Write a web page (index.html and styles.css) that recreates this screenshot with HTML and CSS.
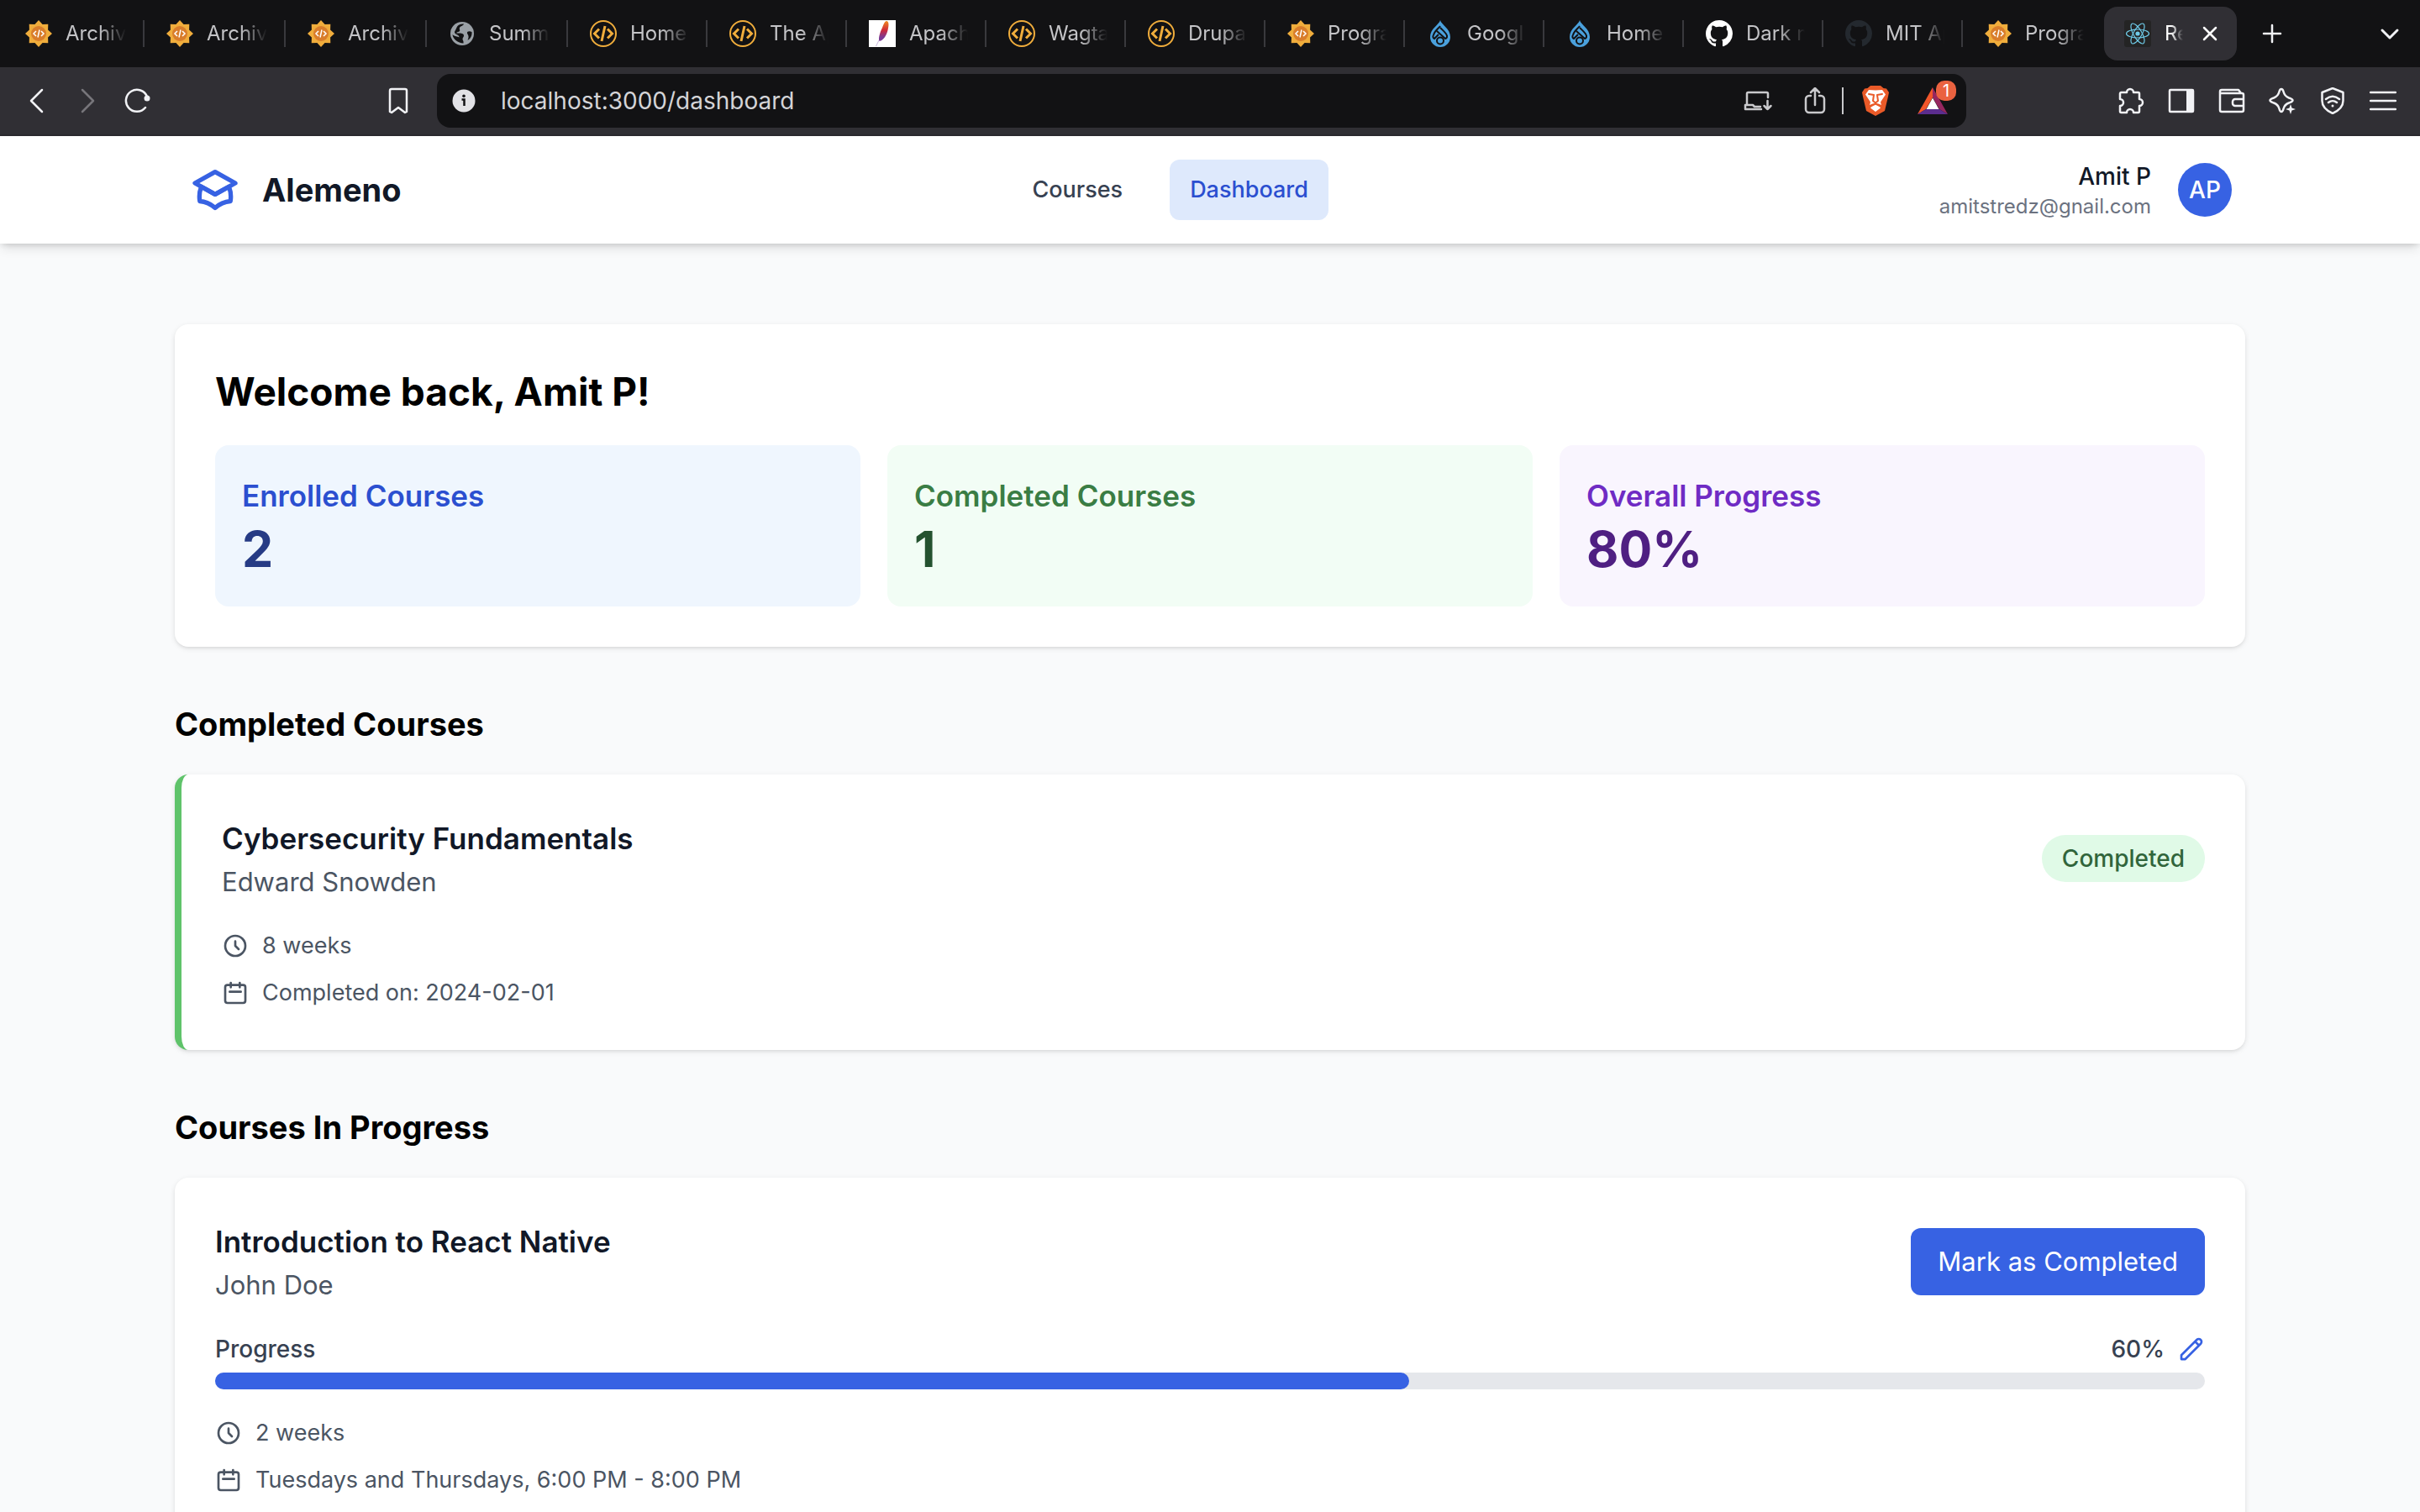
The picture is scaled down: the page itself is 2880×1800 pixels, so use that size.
FILE: index.html
```html
<!DOCTYPE html>
<html lang="en">
<head>
<meta charset="utf-8">
<title>Dashboard</title>
<link rel="stylesheet" href="styles.css">
</head>
<body>
<svg class="sprite" aria-hidden="true">
  <symbol id="i-sun" viewBox="0 0 32 32">
    <path fill="#f0ad3c" d="M16 0l4.600 4.900 6.700-.2-.2 6.700L32 16l-4.900 4.600.2 6.700-6.700-.2L16 32l-4.600-4.900-6.700.2.2-6.700L0 16l4.900-4.600-.2-6.700 6.700.2z"/>
    <circle cx="16" cy="16" r="9" fill="#d97d2b"/>
    <path fill="none" stroke="#fff" stroke-width="1.500" d="M13 13l-3 3 3 3M19 13l3 3-3 3M17 11.500l-2 9"/>
  </symbol>
  <symbol id="i-code" viewBox="0 0 32 32">
    <circle cx="16" cy="16" r="15" fill="none" stroke="#f0ad3c" stroke-width="2"/>
    <path fill="none" stroke="#f0ad3c" stroke-width="3" d="M11 10.500L5.500 16l5.500 5.500M21 10.500l5.500 5.500-5.500 5.500M18 7l-4 18"/>
  </symbol>
  <symbol id="i-globe" viewBox="0 0 32 32">
    <circle cx="16" cy="16" r="14" fill="#9aa0a6"/>
    <path fill="#121214" d="M18 4.500c-1 3-4 2-5 4.500-.8 2.200 1 2.500 0 4-1 1.300-3 .8-4 2.500 4 0 8.500-.5 9 2.500.3 2-1.500 2.500-1.500 4.500 0 1.500 1.500 2 1 5C11 27 5 23 4.500 17c3 3 5.500 2 8 3.500 0-1.500-1-2.500-3-3.500-3-1.500-3-3-1.500-5 1-1.500 1-3 2.500-5 1.500-1.800 4-2.800 7.500-2.500z"/>
    <path fill="#121214" d="M27.500 14c-3-1.500-6-.5-5.500 1.500s3 3 .5 8.500c3-1.500 5.500-5 5-10z"/>
  </symbol>
  <symbol id="i-feather" viewBox="0 0 32 32">
    <defs><linearGradient id="fg" x1="0" y1="0" x2="0" y2="1"><stop offset="0" stop-color="#f08a1d"/><stop offset=".45" stop-color="#cf2a3a"/><stop offset=".8" stop-color="#7b3a94"/></linearGradient></defs>
    <path fill="#fff" d="M0 0h32v32H0z"/>
    <path fill="url(#fg)" d="M21 1c3 0 3 5 1.500 11-1.500 6-5 12-10 13C11 22 13 15 16 9c1.500-4 3-8 5-8z"/>
    <path stroke="#c9b6dc" d="M12 24l-3.500 7"/>
  </symbol>
  <symbol id="i-drop" viewBox="0 0 32 32">
    <path fill="#4aa0dc" d="M16 0c1 5 12 10 12 20a12 12 0 0 1-24 0C4 10 15 5 16 0z"/>
    <path fill="none" stroke="#121214" stroke-width="2" d="M16 7c-2 3-7 6-8 11M12 13l10 9a2.500 2.500 0 0 0 2-3c0-3-4-6-8-10M14 17l-5 5a2.500 2.500 0 0 1-1-4"/>
    <circle cx="16" cy="24.500" r="4" fill="none" stroke="#121214" stroke-width="2"/>
  </symbol>
  <symbol id="i-github" viewBox="0 0 16 16">
    <path d="M8 0C3.580 0 0 3.580 0 8c0 3.540 2.290 6.530 5.470 7.590.4.070.55-.17.55-.38 0-.19-.01-.82-.01-1.490-2.010.37-2.530-.49-2.690-.94-.09-.23-.48-.94-.82-1.130-.28-.15-.68-.52-.01-.53.63-.01 1.080.58 1.230.82.72 1.210 1.870.87 2.330.66.07-.52.28-.87.51-1.070-1.780-.2-3.640-.89-3.640-3.950 0-.87.31-1.590.82-2.150-.08-.2-.36-1.020.08-2.120 0 0 .67-.21 2.200.82.64-.18 1.320-.27 2-.27s1.360.09 2 .27c1.530-1.040 2.200-.82 2.200-.82.44 1.100.16 1.920.08 2.120.51.56.82 1.270.82 2.150 0 3.070-1.870 3.750-3.650 3.950.29.25.54.73.54 1.480 0 1.070-.01 1.930-.01 2.200 0 .21.15.46.55.38A8.010 8.010 0 0 0 16 8c0-4.420-3.580-8-8-8z"/>
  </symbol>
  <symbol id="i-react" viewBox="0 0 32 32">
    <rect width="32" height="32" rx="3" fill="#242424"/>
    <g fill="none" stroke="#6fcbe8" stroke-width="1.200">
      <ellipse cx="16" cy="16" rx="13.500" ry="5"/>
      <ellipse cx="16" cy="16" rx="13.500" ry="5" transform="rotate(60 16 16)"/>
      <ellipse cx="16" cy="16" rx="13.500" ry="5" transform="rotate(120 16 16)"/>
    </g>
    <circle cx="16" cy="16" r="2.600" fill="#6fcbe8"/>
  </symbol>
  <symbol id="i-clock" viewBox="0 0 24 24">
    <path class="line" d="M12 8v4l3 3m6-3a9 9 0 1 1-18 0 9 9 0 0 1 18 0z"/>
  </symbol>
  <symbol id="i-calendar" viewBox="0 0 24 24">
    <path class="line" d="M8 7V3m8 4V3m-9 8h10M5 21h14a2 2 0 0 0 2-2V7a2 2 0 0 0-2-2H5a2 2 0 0 0-2 2v12a2 2 0 0 0 2 2z"/>
  </symbol>
</svg>

<div class="browser">
  <div class="tabs">
    <div class="tab"><svg class="fav"><use href="#i-sun"/></svg><span class="tab-title">Archiv</span></div>
    <div class="tab"><svg class="fav"><use href="#i-sun"/></svg><span class="tab-title">Archiv</span></div>
    <div class="tab"><svg class="fav"><use href="#i-sun"/></svg><span class="tab-title">Archiv</span></div>
    <div class="tab"><svg class="fav"><use href="#i-globe"/></svg><span class="tab-title">Summ</span></div>
    <div class="tab narrow"><svg class="fav"><use href="#i-code"/></svg><span class="tab-title">Home</span></div>
    <div class="tab narrow"><svg class="fav"><use href="#i-code"/></svg><span class="tab-title">The Ap</span></div>
    <div class="tab narrow"><svg class="fav"><use href="#i-feather"/></svg><span class="tab-title">Apach</span></div>
    <div class="tab narrow"><svg class="fav"><use href="#i-code"/></svg><span class="tab-title">Wagta</span></div>
    <div class="tab narrow"><svg class="fav"><use href="#i-code"/></svg><span class="tab-title">Drupa</span></div>
    <div class="tab narrow"><svg class="fav"><use href="#i-sun"/></svg><span class="tab-title">Progra</span></div>
    <div class="tab narrow"><svg class="fav"><use href="#i-drop"/></svg><span class="tab-title">Googl</span></div>
    <div class="tab narrow"><svg class="fav"><use href="#i-drop"/></svg><span class="tab-title">Home</span></div>
    <div class="tab narrow"><svg class="fav gh-light"><use href="#i-github"/></svg><span class="tab-title">Dark m</span></div>
    <div class="tab narrow"><svg class="fav gh-dark"><use href="#i-github"/></svg><span class="tab-title">MIT Ap</span></div>
    <div class="tab narrow last"><svg class="fav"><use href="#i-sun"/></svg><span class="tab-title">Progra</span></div>
    <div class="tab active"><svg class="fav"><use href="#i-react"/></svg><span class="tab-title">Re</span>
      <button class="icon-btn close" aria-label="Close tab"><svg width="32" height="32" viewBox="0 0 32 32"><path d="M9 9l14 14M23 9L9 23"/></svg></button></div>
    <button class="icon-btn new-tab" aria-label="New tab"><svg width="32" height="32" viewBox="0 0 32 32"><path d="M16 6v20M6 16h20"/></svg></button>
    <button class="icon-btn tab-search" aria-label="Search tabs"><svg width="32" height="32" viewBox="0 0 32 32"><path stroke-width="3" d="M7 12l9 9 9-9"/></svg></button>
  </div>

  <div class="toolbar">
    <button class="icon-btn" aria-label="Back"><svg width="32" height="32" viewBox="0 0 32 32"><path d="M22 3L9 16l13 13"/></svg></button>
    <button class="icon-btn dim" aria-label="Forward"><svg width="32" height="32" viewBox="0 0 32 32"><path d="M10 3l13 13-13 13"/></svg></button>
    <button class="icon-btn" aria-label="Reload"><svg width="32" height="32" viewBox="0 0 32 32"><path d="M25 24a13 13 0 1 1 2-13"/><circle class="solid" cx="27" cy="13" r="3.500"/></svg></button>
    <button class="icon-btn bookmark" aria-label="Bookmark"><svg width="32" height="32" viewBox="0 0 32 32"><path d="M6 29V4a2 2 0 0 1 2-2h16a2 2 0 0 1 2 2v25l-2 1-8-6-8 6z"/></svg></button>
    <div class="address">
      <svg class="info" viewBox="0 0 28 28"><circle cx="14" cy="14" r="13.500" fill="#e2e2e6"/><path fill="none" stroke="#121214" stroke-width="2.500" d="M11.500 12.500h3V20"/><circle cx="14" cy="8.300" r="1.800" fill="#121214"/></svg>
      <input class="url" type="text" aria-label="Address" value="localhost:3000/dashboard">
      <button class="icon-btn soft" aria-label="Install"><svg width="36" height="32" viewBox="0 0 36 32"><path d="M5 21V7.500A1.500 1.500 0 0 1 6.500 6h22A1.500 1.500 0 0 1 30 7.500V12M22 26H3v-5h9l2 2h7M29.500 16v10M25.500 22l4 4 4-4"/></svg></button>
      <button class="icon-btn soft share" aria-label="Share"><svg width="32" height="32" viewBox="0 0 32 32"><path d="M11 10H9a4 4 0 0 0-4 4v12a4 4 0 0 0 4 4h14a4 4 0 0 0 4-4V14a4 4 0 0 0-4-4h-2M16 21V1M11 6l5-5 5 5"/></svg></button>
      <span class="divider"></span>
      <button class="icon-btn" aria-label="Shields"><svg width="32" height="36" viewBox="0 0 32 36"><path fill="#ea5a28" stroke="none" d="M10 0h12l3.500 3 3.500.5L32 8l-1 5-4 17-11 6-11-6L1 13 0 8l3-4.500L6.500 3z"/><path fill="#fff" stroke="none" d="M16 5.500l8-.5 4 5.500-6 9 1 3.500-5-2 2 3 2 2.500L16 31l-6-4.500 2-2.500 2-3-5 2 1-3.500-6-9L8 5z"/><path stroke="#ea5a28" stroke-width="2" d="M8 10l6 1-1 7 3 2.500 3-2.500-1-7 6-1M11 24l5-2.500 5 2.500"/></svg></button>
      <button class="icon-btn rewards" aria-label="Rewards, 1 new"><svg width="36" height="32" viewBox="0 0 36 32"><path fill="#f1562b" stroke="none" d="M18 0v12L10 26 0 32z"/><path fill="#96275f" stroke="none" d="M18 0v12l8 14 10 6z"/><path fill="#5b2d8e" stroke="none" d="M0 32l10-6h16l10 6z"/><path fill="#fff" stroke="none" d="M18 12.500L10.500 26h15z"/></svg><span class="badge">1</span></button>
    </div>
    <button class="icon-btn" aria-label="Extensions"><svg width="32" height="32" viewBox="0 0 32 32"><path d="M3 7.500A1.500 1.500 0 0 1 4.500 6H11a4 4 0 0 1 8 0h5.500A1.500 1.500 0 0 1 26 7.500V14a4 4 0 0 1 0 8v6.500a1.500 1.500 0 0 1-1.500 1.500H19a4 4 0 0 0-8 0H4.500A1.500 1.500 0 0 1 3 28.500V22a4 4 0 0 0 0-8z"/></svg></button>
    <button class="icon-btn" aria-label="Sidebar"><svg width="32" height="32" viewBox="0 0 32 32"><rect x="2" y="3" width="28" height="26" rx="1"/><path class="solid" d="M22 3h8v26h-8z"/></svg></button>
    <button class="icon-btn" aria-label="Wallet"><svg width="32" height="32" viewBox="0 0 32 32"><path d="M2 7v20a2 2 0 0 0 2 2h24a2 2 0 0 0 2-2V9a2 2 0 0 0-2-2H2V5a2 2 0 0 1 2-2h20l3 4M30 14H20a3 3 0 0 0-3 3v2a3 3 0 0 0 3 3h10"/></svg></button>
    <button class="icon-btn" aria-label="Leo AI"><svg width="32" height="32" viewBox="0 0 32 32"><path d="M15 2c1.500 0 2 1 2.500 3 1 4 2.500 6 6.500 7.500 3 1 4.500 1.500 4.500 3s-2 2-4.500 3c-4 1.500-5.500 3-6.500 7-.5 2-1 3.500-2.500 3.500s-2-1.500-2.500-3.500c-1-4-2.500-5.500-6.500-7-2.500-1-4.500-1.500-4.500-3s1.500-2 4.500-3C10 11 11.500 9 12.500 5 13 3 13.500 2 15 2z"/><path class="solid" d="M26 20l1.500 4.500L32 26l-4.500 1.500L26 32l-1.500-4.500L20 26l4.500-1.500z"/></svg></button>
    <button class="icon-btn" aria-label="VPN"><svg width="32" height="32" viewBox="0 0 32 32"><path d="M16 1l12.500 5v10c0 7-5 11.500-12.500 15C8.500 27.500 3.500 23 3.500 16V6zM8 14c5-4 11-4 16 0M11 18c3-2.500 7-2.500 10 0"/><circle class="solid" cx="16" cy="22" r="1.500"/></svg></button>
    <button class="icon-btn" aria-label="Menu"><svg width="32" height="32" viewBox="0 0 32 32"><path d="M1 6h30M1 16h30M1 26h30"/></svg></button>
  </div>
</div>

<div class="page">
  <header class="site-header">
    <div class="header-inner">
      <a class="brand" href="#"><svg class="brand-icon" viewBox="0 0 24 24"><path class="line" d="M12 14l9-5-9-5-9 5 9 5z"/><path class="line" d="M12 14l6.160-3.422a12.083 12.083 0 0 1 .665 6.479A11.952 11.952 0 0 0 12 20.055a11.952 11.952 0 0 0-6.824-2.998 12.078 12.078 0 0 1 .665-6.479L12 14z"/></svg>Alemeno</a>
      <nav class="nav"><a class="nav-link" href="#">Courses</a><a class="nav-link current" href="#">Dashboard</a></nav>
      <div class="user">
        <div class="user-text"><div class="user-name">Amit P</div><div class="user-mail">amitstredz@gnail.com</div></div>
        <div class="avatar">AP</div>
      </div>
    </div>
  </header>

  <main class="content">
    <section class="card">
      <h1 class="welcome">Welcome back, Amit P!</h1>
      <div class="stats">
        <div class="stat blue"><h3 class="stat-label">Enrolled Courses</h3><p class="stat-value">2</p></div>
        <div class="stat green"><h3 class="stat-label">Completed Courses</h3><p class="stat-value">1</p></div>
        <div class="stat purple"><h3 class="stat-label">Overall Progress</h3><p class="stat-value">80%</p></div>
      </div>
    </section>

    <section class="group">
      <h2 class="group-title">Completed Courses</h2>
      <article class="card done">
        <div class="course-head">
          <div><h3 class="course-title">Cybersecurity Fundamentals</h3><p class="teacher">Edward Snowden</p></div>
          <span class="pill">Completed</span>
        </div>
        <ul class="facts">
          <li class="fact"><svg class="fact-icon"><use href="#i-clock"/></svg>8 weeks</li>
          <li class="fact"><svg class="fact-icon"><use href="#i-calendar"/></svg>Completed on: 2024-02-01</li>
        </ul>
      </article>
    </section>

    <section class="group">
      <h2 class="group-title">Courses In Progress</h2>
      <article class="card">
        <div class="course-head">
          <div><h3 class="course-title">Introduction to React Native</h3><p class="teacher">John Doe</p></div>
          <button class="primary">Mark as Completed</button>
        </div>
        <div class="progress">
          <div class="progress-row">
            <span>Progress</span>
            <span class="progress-value">60%<button class="edit" aria-label="Edit progress"><svg class="edit-icon" viewBox="0 0 24 24"><path class="line" d="M15.232 5.232l3.536 3.536m-2.036-5.036a2.500 2.500 0 1 1 3.536 3.536L6.500 21.036H3v-3.572L16.732 3.732z"/></svg></button></span>
          </div>
          <div class="track"><div class="fill" style="width: 60%"></div></div>
        </div>
        <ul class="facts">
          <li class="fact"><svg class="fact-icon"><use href="#i-clock"/></svg>2 weeks</li>
          <li class="fact"><svg class="fact-icon"><use href="#i-calendar"/></svg>Tuesdays and Thursdays, 6:00 PM - 8:00 PM</li>
        </ul>
      </article>
    </section>
  </main>
</div>
</body>
</html>
```
FILE: styles.css
```css
* { box-sizing: border-box; margin: 0; padding: 0; }

body {
  height: 100vh;
  display: flex;
  flex-direction: column;
  overflow: hidden;
  font-family: Inter, "Liberation Sans", sans-serif;
  color: #000;
  background: #f9fafb;
}

button, input { font: inherit; color: inherit; background: none; border: 0; }
a { color: inherit; text-decoration: none; }
ul { list-style: none; }
svg { display: block; flex: none; }
.sprite { position: absolute; width: 0; height: 0; }
.line {
  fill: none;
  stroke: currentColor;
  stroke-width: 2;
  stroke-linecap: round;
  stroke-linejoin: round;
}

/* browser chrome */
.browser { flex: none; background: #302f34; border-bottom: 2px solid #2a292e; }

.tabs {
  display: flex;
  align-items: center;
  height: 80px;
  padding: 0 16px 0 4px;
  background: #121214;
}
.tab {
  display: flex;
  align-items: center;
  gap: 16px;
  width: 168px;
  height: 32px;
  padding: 0 20px 0 26px;
  border-right: 2px solid #39393d;
  font-size: 24px;
  line-height: 32px;
  color: #c4c4c7;
}
.tab.narrow { width: 166px; }
.tab.last { border-color: transparent; }
.tab-title {
  flex: 1;
  min-width: 0;
  overflow: hidden;
  white-space: nowrap;
  -webkit-mask-image: linear-gradient(to right, #000 calc(100% - 32px), transparent);
  mask-image: linear-gradient(to right, #000 calc(100% - 32px), transparent);
}
.fav { width: 32px; height: 32px; }
.gh-light { fill: #fff; }
.gh-dark { fill: #24292f; }
.tab.active {
  width: 158px;
  height: 64px;
  margin-left: 2px;
  padding: 0 16px 0 24px;
  border: 0;
  border-radius: 16px;
  background: #302f34;
  color: #fff;
}
.tab.active .tab-title {
  -webkit-mask-image: linear-gradient(to right, #000 8px, transparent);
  mask-image: linear-gradient(to right, #000 8px, transparent);
}

.icon-btn {
  display: flex;
  flex: none;
  align-items: center;
  justify-content: center;
  width: 60px;
  height: 64px;
  color: #f1f2f5;
  fill: none;
  stroke: currentColor;
  stroke-width: 2.500;
  stroke-linecap: round;
  stroke-linejoin: round;
}
.icon-btn .solid { fill: currentColor; stroke: none; }
.icon-btn.dim { color: #77767b; }
.icon-btn.soft { color: #c9c9cc; }
.close { width: 32px; }
.tab.active .close { color: #fff; }
.new-tab { margin-left: 12px; }
.tab-search { width: 40px; margin-left: auto; }

.toolbar {
  display: flex;
  align-items: center;
  height: 80px;
  padding: 0 14px;
}
.bookmark { margin-left: 250px; }
.address {
  display: flex;
  flex: 1;
  align-items: center;
  height: 64px;
  margin: 0 166px 0 16px;
  padding: 0 10px 0 18px;
  border-radius: 16px;
  background: #121214;
}
.info { width: 28px; height: 28px; margin-right: 30px; }
.url {
  flex: 1;
  min-width: 0;
  font-size: 28px;
  line-height: 40px;
  color: #d4d4d7;
  outline: 0;
}
.address .share { margin: 0 2px 0 8px; }
.divider { width: 2px; height: 32px; margin-right: 8px; background: #c9c9cc; }
.rewards { position: relative; margin-left: 8px; }
.badge {
  position: absolute;
  top: 8px;
  right: 2px;
  width: 24px;
  border-radius: 10px;
  background: #ea6240;
  color: #fff;
  font-size: 20px;
  line-height: 24px;
  text-align: center;
}

/* application */
.page { flex: 1; min-height: 0; overflow: hidden; }

.site-header {
  position: relative;
  background: #fff;
  box-shadow: 0 8px 12px -2px rgba(0, 0, 0, .1), 0 4px 8px -4px rgba(0, 0, 0, .1), 0 0 8px rgba(0, 0, 0, .08);
}
.header-inner {
  display: flex;
  align-items: center;
  justify-content: space-between;
  max-width: 2560px;
  height: 128px;
  margin: 0 auto;
  padding: 0 64px;
}
.brand {
  display: flex;
  align-items: center;
  gap: 24px;
  font-size: 38px;
  font-weight: 700;
  line-height: 56px;
  color: #111827;
}
.brand-icon { width: 64px; height: 64px; color: #3762e3; }
.nav { display: flex; gap: 32px; }
.nav-link {
  padding: 16px 24px;
  border-radius: 12px;
  font-size: 27px;
  font-weight: 500;
  line-height: 40px;
  color: #374151;
}
.nav-link.current { background: #dee9fc; color: #2b4fd0; }
.user { display: flex; align-items: center; gap: 32px; text-align: right; }
.user-name { font-size: 28px; font-weight: 500; line-height: 40px; color: #111827; }
.user-mail { font-size: 24px; line-height: 32px; color: #6b7280; }
.avatar {
  width: 64px;
  border-radius: 50%;
  background: #3762e3;
  color: #fff;
  font-size: 28px;
  font-weight: 500;
  line-height: 64px;
  text-align: center;
}

.content {
  display: flex;
  flex-direction: column;
  gap: 64px;
  max-width: 2560px;
  margin: 0 auto;
  padding: 96px 48px;
}
.card {
  padding: 48px;
  border-radius: 16px;
  background: #fff;
  box-shadow: 0 2px 6px rgba(0, 0, 0, .1), 0 2px 4px -2px rgba(0, 0, 0, .1);
}
.card.done { border-left: 8px solid #5fc36a; }
.welcome { margin-bottom: 32px; font-size: 46px; font-weight: 700; line-height: 64px; }
.stats { display: grid; grid-template-columns: repeat(3, 1fr); gap: 32px; }
.stat { padding: 32px; border-radius: 16px; }
.stat-label { font-size: 35px; font-weight: 600; line-height: 56px; }
.stat-value { font-size: 59px; font-weight: 700; line-height: 72px; }
.blue { background: #eff6fe; color: #2b4fd0; }
.blue .stat-value { color: #263b85; }
.green { background: #f2fdf5; color: #3a7d44; }
.green .stat-value { color: #24522f; }
.purple { background: #f9f5fe; color: #6f2bc4; }
.purple .stat-value { color: #4f1f82; }

.group-title { margin-bottom: 32px; font-size: 38px; font-weight: 700; line-height: 56px; }
.course-head { display: flex; align-items: center; justify-content: space-between; }
.course-title { font-size: 35px; font-weight: 600; line-height: 56px; color: #111827; }
.teacher { font-size: 31px; line-height: 48px; color: #4b5563; }
.pill {
  padding: 8px 24px;
  border-radius: 28px;
  background: #e0fae7;
  color: #31653b;
  font-size: 28px;
  font-weight: 500;
  line-height: 40px;
}
.facts { display: flex; flex-direction: column; gap: 16px; margin-top: 32px; }
.fact {
  display: flex;
  align-items: center;
  gap: 16px;
  font-size: 27px;
  line-height: 40px;
  color: #4b5563;
}
.fact-icon { width: 32px; height: 32px; }
.primary {
  padding: 16px 32px;
  border-radius: 12px;
  background: #3762e3;
  color: #fff;
  font-size: 31px;
  line-height: 48px;
}
.progress { margin-top: 32px; }
.progress-row {
  display: flex;
  justify-content: space-between;
  font-size: 28px;
  font-weight: 500;
  line-height: 40px;
  color: #374151;
}
.progress-value { display: flex; align-items: center; gap: 16px; }
.edit { color: #3762e3; }
.edit-icon { width: 32px; height: 32px; }
.track { height: 20px; margin-top: 8px; border-radius: 10px; background: #e5e7eb; }
.fill { height: 100%; border-radius: 10px; background: #3762e3; }
```
